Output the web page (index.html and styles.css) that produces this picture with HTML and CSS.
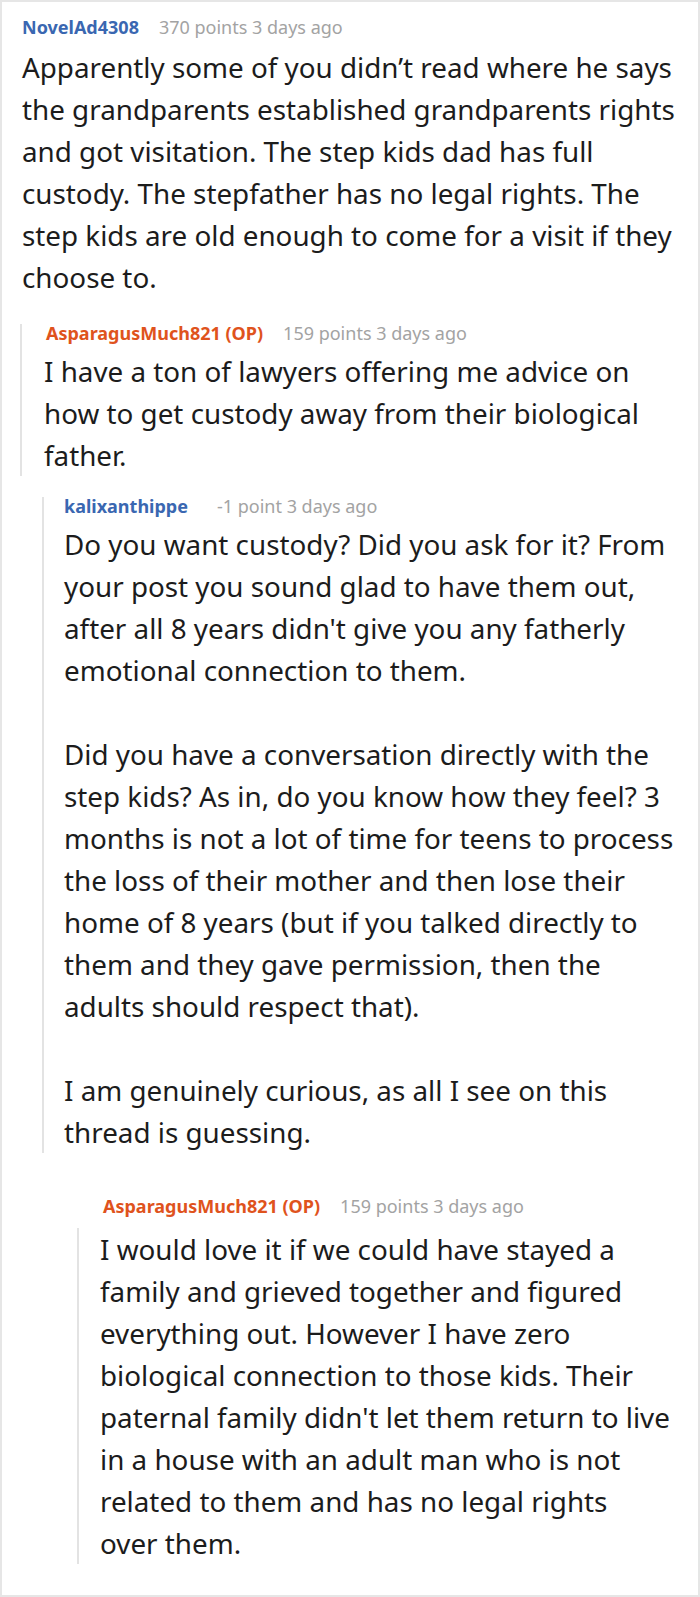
FILE: index.html
```html
<!DOCTYPE html>
<html lang="en">
<head>
<meta charset="utf-8">
<title>Comments</title>
<link rel="stylesheet" href="styles.css">
</head>
<body>
<div class="thread">
  <div class="comment l1">
    <div class="meta"><span class="user blue">NovelAd4308</span><span class="info">370 points 3 days ago</span></div>
    <div class="body">
      <p>Apparently some of you didn’t read where he says the grandparents established grandparents rights and got visitation. The step kids dad has full custody. The stepfather has no legal rights. The step kids are old enough to come for a visit if they choose to.</p>
    </div>
  </div>

  <div class="comment l2">
    <div class="meta"><span class="user op">AsparagusMuch821 (OP)</span><span class="info">159 points 3 days ago</span></div>
    <div class="body">
      <p>I have a ton of lawyers offering me advice on how to get custody away from their biological father.</p>
    </div>
  </div>

  <div class="comment l3">
    <div class="meta"><span class="user blue">kalixanthippe</span><span class="info wide">-1 point 3 days ago</span></div>
    <div class="body">
      <p>Do you want custody? Did you ask for it? From your post you sound glad to have them out, after all 8 years didn't give you any fatherly emotional connection to them.</p>
      <p>Did you have a conversation directly with the step kids? As in, do you know how they feel? 3 months is not a lot of time for teens to process the loss of their mother and then lose their home of 8 years (but if you talked directly to them and they gave permission, then the adults should respect that).</p>
      <p>I am genuinely curious, as all I see on this thread is guessing.</p>
    </div>
  </div>

  <div class="comment l4">
    <div class="meta"><span class="user op">AsparagusMuch821 (OP)</span><span class="info">159 points 3 days ago</span></div>
    <div class="rail">
      <div class="body">
        <p>I would love it if we could have stayed a family and grieved together and figured everything out. However I have zero biological connection to those kids. Their paternal family didn't let them return to live in a house with an adult man who is not related to them and has no legal rights over them.</p>
      </div>
    </div>
  </div>
</div>
</body>
</html>
```

FILE: styles.css
```css
html, body {
  margin: 0;
  padding: 0;
  background: #ffffff;
}

.thread {
  box-sizing: border-box;
  width: 700px;
  height: 1597px;
  border: 2px solid #e6e6e6;
  padding: 16px 20px 0 20px;
  font-family: "Noto Sans", "Open Sans", sans-serif;
  color: #1c1c1c;
}

.meta {
  font-size: 18px;
  line-height: 18px;
  white-space: nowrap;
}

.user {
  font-weight: 700;
}

.user.blue {
  color: #3a67b1;
}

.user.op {
  color: #df531d;
}

.info {
  color: #a3a3a3;
  margin-left: 20px;
}

.info.wide {
  margin-left: 29px;
}

.body {
  font-size: 27.8px;
  line-height: 42px;
}

.body p {
  margin: 0;
}

.body p + p {
  margin-top: 42px;
}

/* level 1 */
.l1 {
  margin-right: -14px;
}

.l1 .body {
  margin-top: 10px;
}

/* level 2 */
.l2 {
  margin-top: 26px;
  margin-left: -2px;
  margin-right: -7px;
  border-left: 2px solid #e3e3e3;
  padding-left: 22px;
}

.l2 .meta {
  padding-left: 2px;
}

.l2 .body {
  margin-top: 8px;
  margin-bottom: -11px;
}

/* level 3 */
.l3 {
  margin-top: 32px;
  margin-left: 20px;
  margin-right: -4px;
  border-left: 2px solid #e3e3e3;
  padding-left: 20px;
}

.l3 .body {
  margin-top: 8px;
  margin-bottom: -11px;
}

/* level 4 */
.l4 {
  margin-top: 55px;
}

.l4 .meta {
  padding-left: 81px;
}

.l4 .rail {
  margin-top: 25px;
  margin-left: 55px;
  margin-right: 7px;
  border-left: 2px solid #e3e3e3;
  padding-left: 21px;
}

.l4 .body {
  margin-top: -12px;
  margin-bottom: -4px;
}
```
